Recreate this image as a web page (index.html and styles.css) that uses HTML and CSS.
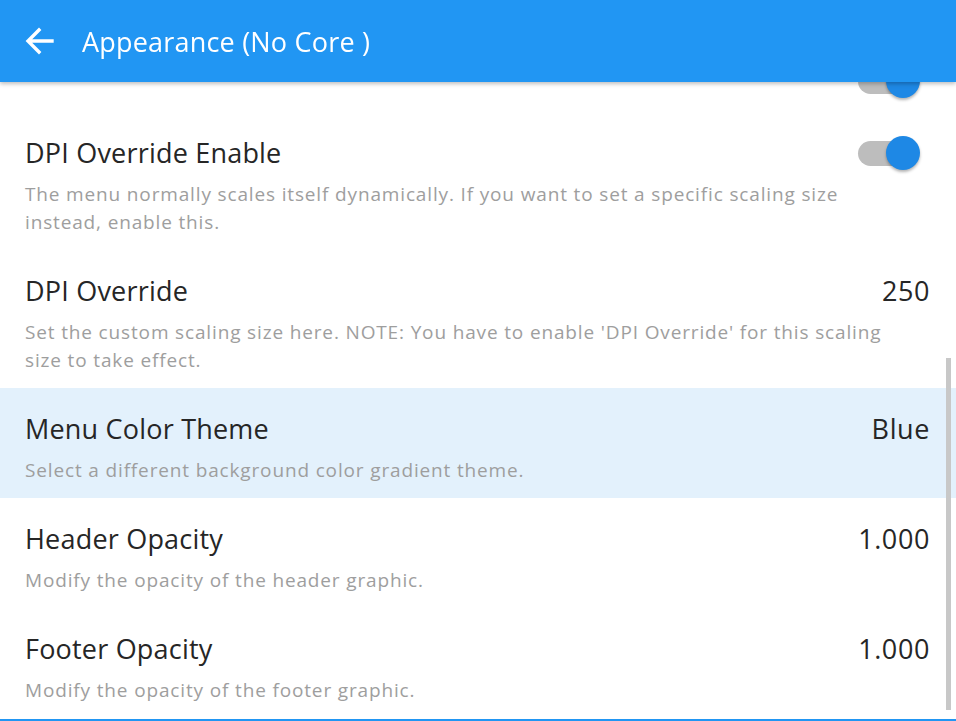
FILE: index.html
```html
<!DOCTYPE html>
<html lang="en">
<head>
    <meta charset="UTF-8">
    <meta name="viewport" content="width=device-width, initial-scale=1.0">
    <title>Appearance (No Core )</title>
    <link rel="stylesheet" href="styles.css">
</head>
<body>
<header class="toolbar">
    <svg class="back" width="30" height="28" viewBox="0 0 30 28">
        <path d="M27 14H4M14 3L3 14l11 11" fill="none" stroke="#fff" stroke-width="3.4" stroke-linecap="square"/>
    </svg>
    <h1>Appearance (No Core )</h1>
</header>

<div class="list">
    <!-- item scrolled under the toolbar, only its switch peeks out -->
    <div class="item">
        <div class="row">
            <span class="title"></span>
            <span class="switch on"></span>
        </div>
    </div>
    <div class="item">
        <div class="row">
            <span class="title">DPI Override Enable</span>
            <span class="switch on"></span>
        </div>
        <p class="desc">The menu normally scales itself dynamically. If you want to set a specific scaling size instead, enable this.</p>
    </div>
    <div class="item">
        <div class="row">
            <span class="title">DPI Override</span>
            <span class="value">250</span>
        </div>
        <p class="desc">Set the custom scaling size here. NOTE: You have to enable 'DPI Override' for this scaling size to take effect.</p>
    </div>
    <div class="item selected">
        <div class="row">
            <span class="title">Menu Color Theme</span>
            <span class="value">Blue</span>
        </div>
        <p class="desc">Select a different background color gradient theme.</p>
    </div>
    <div class="item">
        <div class="row">
            <span class="title">Header Opacity</span>
            <span class="value">1.000</span>
        </div>
        <p class="desc">Modify the opacity of the header graphic.</p>
    </div>
    <div class="item">
        <div class="row">
            <span class="title">Footer Opacity</span>
            <span class="value">1.000</span>
        </div>
        <p class="desc">Modify the opacity of the footer graphic.</p>
    </div>
</div>

<div class="scrollbar"></div>
<div class="bottom-line"></div>
</body>
</html>
```

FILE: styles.css
```css
* {
    box-sizing: border-box;
    margin: 0;
    padding: 0;
}

html, body {
    height: 100%;
    overflow: hidden;
}

body {
    font-family: "Open Sans", "Noto Sans", sans-serif;
    background: #fff;
    color: #262626;
}

.toolbar {
    position: fixed;
    top: 0;
    left: 0;
    right: 0;
    height: 82px;
    background: #2196f3;
    display: flex;
    align-items: center;
    padding-left: 25px;
    box-shadow: 0 2px 4px rgba(0, 0, 0, 0.25);
    z-index: 2;
}

.back {
    margin-right: 27px;
}

.toolbar h1 {
    color: #fff;
    font-size: 27px;
    font-weight: 400;
    letter-spacing: 0.2px;
}

.list {
    padding-top: 40px;
}

.item {
    padding: 24px 26px 14px 25px;
}

.item.selected {
    background: #e3f1fc;
}

.row {
    display: flex;
    justify-content: space-between;
    align-items: center;
    height: 34px;
}

.title {
    font-size: 27px;
    line-height: 34px;
    letter-spacing: 0.2px;
}

.value {
    font-size: 27px;
    line-height: 34px;
    letter-spacing: 0.6px;
}

.desc {
    margin-top: 10px;
    font-size: 19px;
    line-height: 28px;
    letter-spacing: 0.85px;
    color: #9e9e9e;
    padding-right: 20px;
}

.switch {
    position: relative;
    width: 62px;
    height: 34px;
    margin-right: 10px;
}

.switch::before {
    content: "";
    position: absolute;
    left: 0;
    top: 5px;
    width: 52px;
    height: 25px;
    border-radius: 13px;
    background: #bdbdbd;
}

.switch::after {
    content: "";
    position: absolute;
    right: 0;
    top: 0;
    width: 34px;
    height: 34px;
    border-radius: 50%;
    background: #1e88e5;
    box-shadow: 0 2px 3px rgba(0, 0, 0, 0.3);
}

.scrollbar {
    position: fixed;
    right: 5px;
    top: 358px;
    width: 5px;
    height: 352px;
    background: #c8c8c8;
}

.bottom-line {
    position: fixed;
    left: 0;
    right: 0;
    bottom: 0;
    height: 2px;
    background: #2196f3;
}
```
